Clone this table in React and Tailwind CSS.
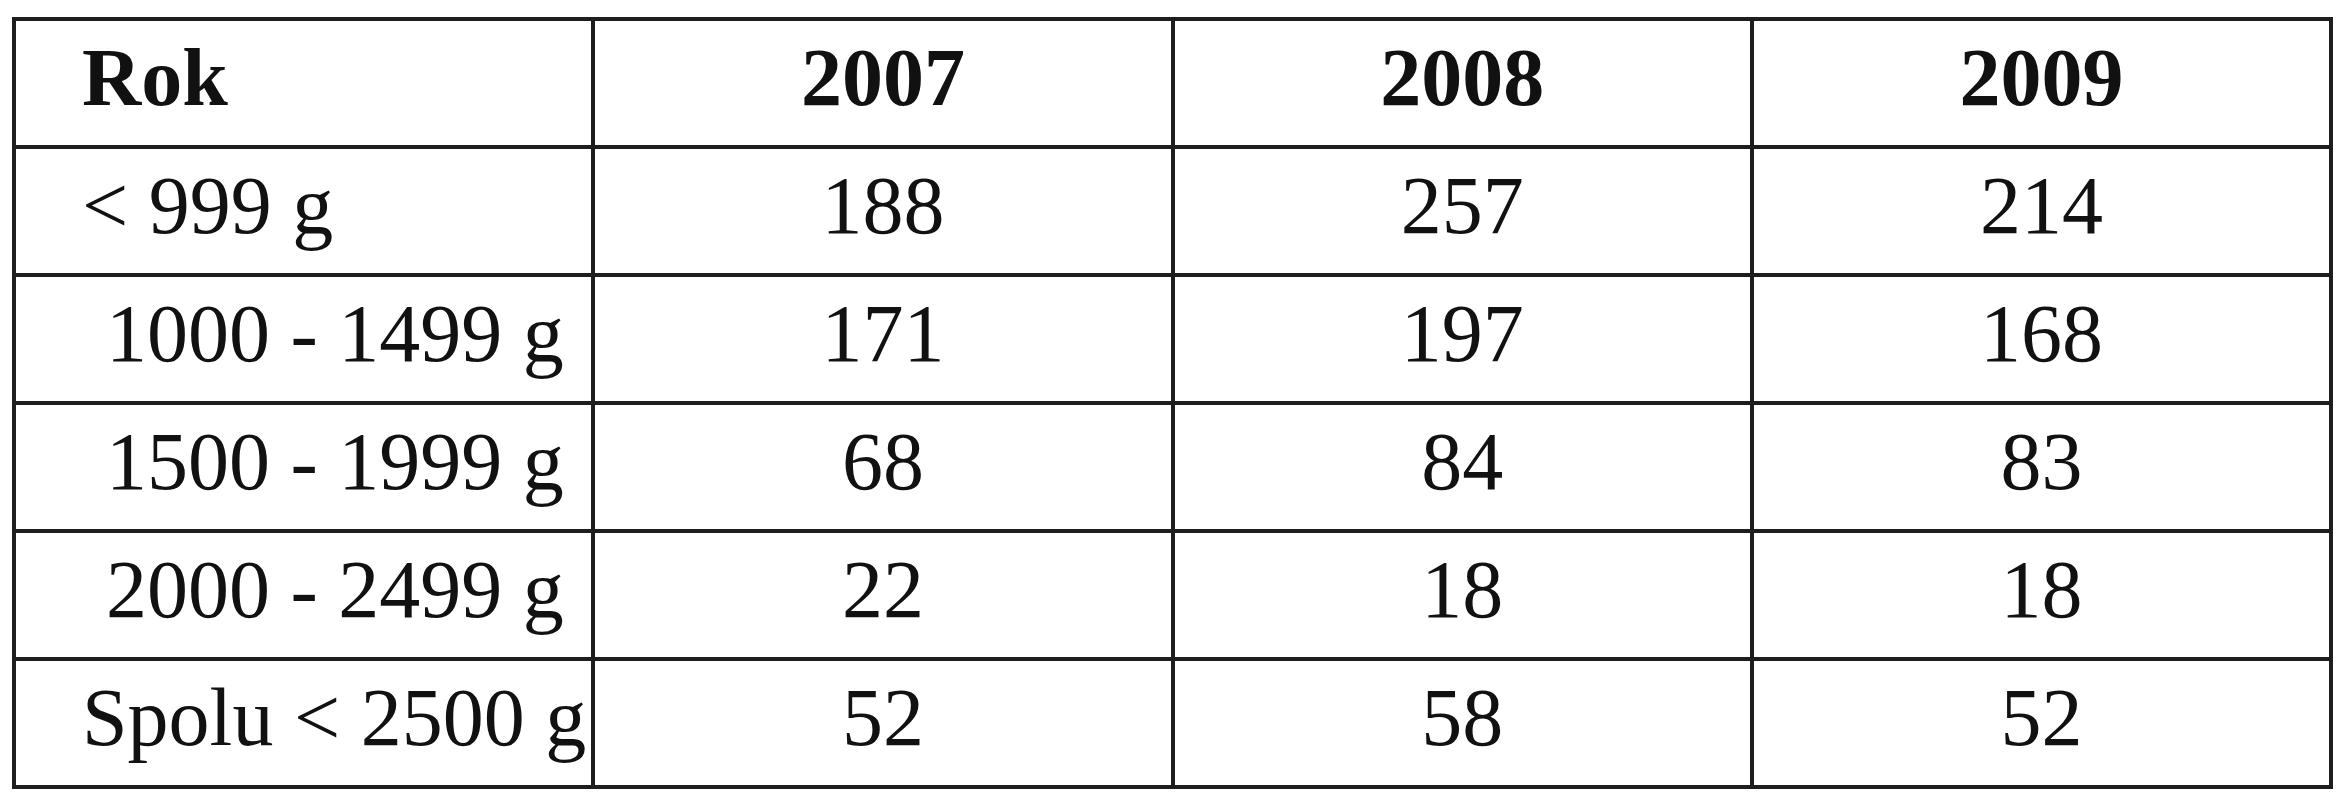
import { Fragment } from 'react';

const rows = [
  { label: '< 999 g', values: ['188', '257', '214'] },
  { label: '1000 - 1499 g', values: ['171', '197', '168'], indent: true },
  { label: '1500 - 1999 g', values: ['68', '84', '83'], indent: true },
  { label: '2000 - 2499 g', values: ['22', '18', '18'], indent: true },
  { label: 'Spolu < 2500 g', values: ['52', '58', '52'] },
];

const years = ['2007', '2008', '2009'];

const cell = 'h-[128px] border-r-4 border-b-4 border-[#1e1e1e] flex items-center pb-[10px] leading-none whitespace-nowrap';

const App = () => {
  return (
    <div className="min-h-[800px] bg-white pt-[17px] pl-[12px] text-[#111] font-['Liberation_Serif',serif] text-[82px]">
      <div className="w-[2321px] grid grid-cols-4 border-l-4 border-t-4 border-[#1e1e1e]">
        <div className={`${cell} pl-[66px] font-bold`}>Rok</div>
        {years.map((y) => (
          <div key={y} className={`${cell} justify-center font-bold`}>
            {y}
          </div>
        ))}
        {rows.map((r) => (
          <Fragment key={r.label}>
            <div className={`${cell} ${r.indent ? 'pl-[90px]' : 'pl-[66px]'}`}>{r.label}</div>
            {r.values.map((v, i) => (
              <div key={i} className={`${cell} justify-center`}>
                {v}
              </div>
            ))}
          </Fragment>
        ))}
      </div>
    </div>
  );
};

export default App;
